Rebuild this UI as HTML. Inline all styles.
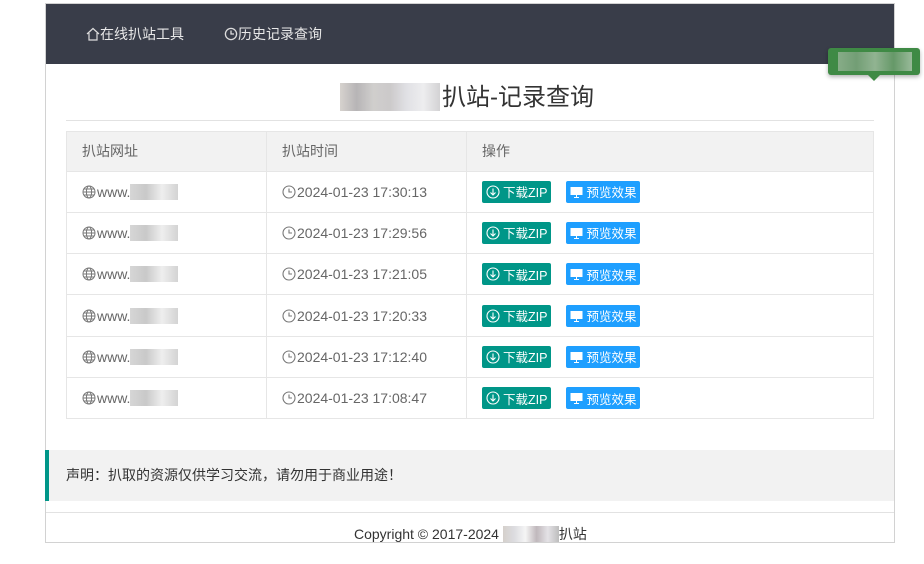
<!DOCTYPE html>
<html><head><meta charset="utf-8">
<style>
*{margin:0;padding:0;box-sizing:border-box}
body{width:924px;height:564px;background:#fff;font-family:"Liberation Sans","Noto Sans CJK SC",sans-serif;position:relative;overflow:hidden;color:#333}
.box{position:absolute;left:45px;top:3px;width:850px;height:540px;border:1px solid #d2d2d2}
.nav{position:absolute;left:46px;top:4px;width:848px;height:60px;background:#393D49}
.nav a{position:absolute;top:0;line-height:60px;color:#e8e8e8;font-size:14px;display:flex;align-items:center}
.title{position:absolute;left:442px;top:82px;font-size:24px;color:#333;line-height:32px}
.blur{position:absolute;display:grid}
.hr{position:absolute;left:66px;width:808px;height:1px;background:#e2e2e2}
table{position:absolute;left:66px;top:131px;width:808px;border-collapse:collapse;font-size:14px}
td,th{border:1px solid #e6e6e6;height:41.3px;padding:0 15px;text-align:left;font-weight:normal;color:#555;vertical-align:middle}
th{background:#f2f2f2;height:39.5px;color:#666}
td{color:#666}
.b{display:inline-flex;align-items:center;height:22px;padding:0 4px;color:#fff;font-size:12.5px;border-radius:2px;vertical-align:middle}
.g{background:#009688}.bl{background:#1E9FFF;margin-left:15px}
.ic{display:inline-block;vertical-align:-2px;margin-right:1px}
.notice{position:absolute;left:45px;top:450px;width:849px;height:51px;background:#f2f2f2;border-left:4px solid #009688;font-size:14px;line-height:51px;padding-left:17px;color:#333}
.foot{position:absolute;top:524px;left:354px;font-size:14px;color:#333}
.tip{position:absolute;left:828px;top:48px;width:92px;height:27px;background:#3f8a45;border-radius:3px;box-shadow:0 2px 4px rgba(0,0,0,.3)}
.tip:after{content:"";position:absolute;left:40px;bottom:-6px;border:6px solid transparent;border-top-color:#3f8a45;border-bottom:0}
</style></head><body>
<div class="box"></div>
<div class="nav">
 <a style="left:40px"><svg width="14" height="14" viewBox="0 0 14 14" fill="none" stroke="#ddd" stroke-width="1.2"><path d="M1 7L7 1.5 13 7M3 6v7h8V6"/></svg>在线扒站工具</a>
 <a style="left:178px"><svg width="14" height="14" viewBox="0 0 14 14" fill="none" stroke="#ddd" stroke-width="1.3"><circle cx="7" cy="7" r="5.6"/><path d="M7 3.5V7h3"/></svg>历史记录查询</a>
</div>
<div class="tip"><div style="position:absolute;left:10px;top:4px;width:74px;height:19px;background:linear-gradient(90deg,#8fb08f,#78a07a,#9ab89a,#6a9a6c,#a3bfa3);opacity:.9"></div></div>
<div class="blur" style="left:340px;top:83px;width:100px;height:28px;background:linear-gradient(90deg,#ccc7c2,#a5a2a4,#c4c2c0,#bfbcbd,#d9d9de,#e9e9eb,#c8c7c9);opacity:.8"></div>
<div class="title">扒站-记录查询</div>
<div class="hr" style="top:120px"></div>
<table>
<tr><th style="width:200px">扒站网址</th><th style="width:200px">扒站时间</th><th>操作</th></tr>
<tr><td>__U__</td><td>__C__2024-01-23 17:30:13</td><td>__A__</td></tr>
<tr><td>__U__</td><td>__C__2024-01-23 17:29:56</td><td>__A__</td></tr>
<tr><td>__U__</td><td>__C__2024-01-23 17:21:05</td><td>__A__</td></tr>
<tr><td>__U__</td><td>__C__2024-01-23 17:20:33</td><td>__A__</td></tr>
<tr><td>__U__</td><td>__C__2024-01-23 17:12:40</td><td>__A__</td></tr>
<tr><td>__U__</td><td>__C__2024-01-23 17:08:47</td><td>__A__</td></tr>
</table>
<div class="notice">声明：扒取的资源仅供学习交流，请勿用于商业用途！</div>
<div class="hr" style="top:512px;left:46px;width:848px"></div>
<div class="foot">Copyright © 2017-2024 <span style="display:inline-block;width:56px;height:16px;vertical-align:-3px;background:linear-gradient(90deg,#d5d0cb,#dcdce0,#f5f5f5,#c0b8bc,#e4e2e6,#bdbdbd)"></span>扒站</div>
<script>
var U='<svg class="ic" width="14" height="14" viewBox="0 0 14 14" fill="none" stroke="#777" stroke-width="1"><circle cx="7" cy="7" r="6"/><ellipse cx="7" cy="7" rx="2.6" ry="6"/><path d="M1 7h12M2 4h10M2 10h10"/></svg>www.<span style="display:inline-block;width:48px;height:16px;vertical-align:-3px;background:linear-gradient(90deg,#d6d6d6,#c9c9c9,#eeeeee,#d3d3d3)"></span>';
var C='<svg class="ic" width="14" height="14" viewBox="0 0 14 14" fill="none" stroke="#777" stroke-width="1.1"><circle cx="7" cy="7" r="6"/><path d="M7 3.5V7h3"/></svg>';
var A='<span class="b g"><svg width="14" height="14" viewBox="0 0 14 14" fill="none" stroke="#fff" stroke-width="1.1" style="margin-right:3px"><circle cx="7" cy="7" r="6"/><path d="M7 3.5v6M4.5 7.5L7 10l2.5-2.5"/></svg>下载ZIP</span><span class="b bl"><svg width="13" height="12" viewBox="0 0 13 12" style="margin-right:3px"><rect x="0.5" y="1" width="12" height="8" fill="#fff"/><path d="M6.5 9v2M4 11.5h5" stroke="#fff"/></svg>预览效果</span>';
document.querySelectorAll('td').forEach(function(t){t.innerHTML=t.innerHTML.replace('__U__',U).replace('__C__',C).replace('__A__',A)});
</script>
</body></html>
